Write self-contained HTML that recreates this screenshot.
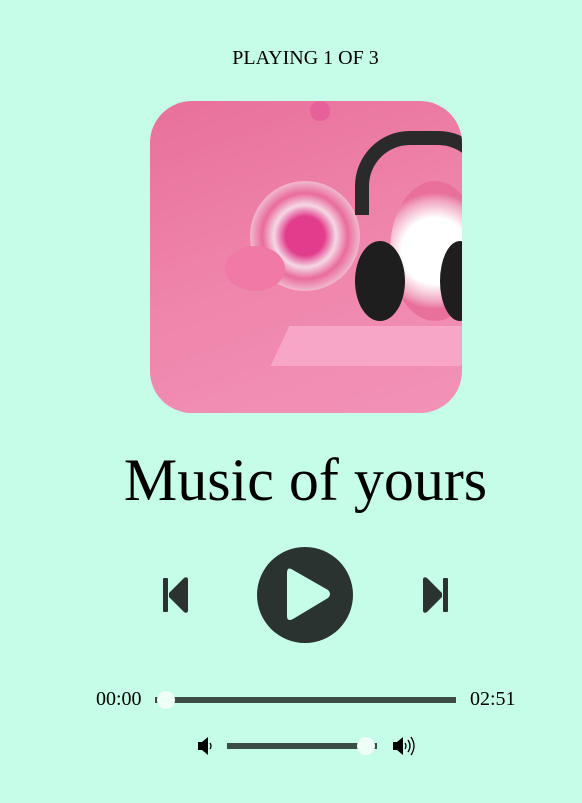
<!DOCTYPE html>
<html><head><style>
body{margin:0;width:582px;height:803px;background:#c5fde8;font-family:"Liberation Serif",serif;position:relative;overflow:hidden}
.a{position:absolute}
</style></head><body>
<div class="a" style="left:0;width:611px;top:47px;text-align:center;font-size:20px;line-height:22px">PLAYING 1 OF 3</div>
<div class="a" style="left:150px;top:101px;width:312px;height:312px;border-radius:42px;overflow:hidden;background:linear-gradient(160deg,#e8709a 0%,#ef85ab 50%,#f392b8 100%)">
 <div class="a" style="left:100px;top:80px;width:110px;height:110px;border-radius:50%;background:radial-gradient(circle,#e23c8c 25%,#f5d8e4 40%,#e96b9c 55%,#f0b6cc 70%,#e8709a 80%)"></div>
 <div class="a" style="left:240px;top:80px;width:90px;height:140px;border-radius:50%;background:radial-gradient(circle,#fff 40%,#f2a9c3 60%,#e8709a 70%)"></div>
 <div class="a" style="left:205px;top:30px;width:110px;height:70px;border-radius:55px 55px 0 0;border:14px solid #2a2a2a;border-bottom:none"></div>
 <div class="a" style="left:205px;top:140px;width:50px;height:80px;border-radius:50%;background:#1e1e1e"></div>
 <div class="a" style="left:290px;top:140px;width:40px;height:80px;border-radius:50%;background:#1e1e1e"></div>
 <div class="a" style="left:75px;top:145px;width:60px;height:45px;border-radius:50%;background:#f07aa5"></div>
 <div class="a" style="left:130px;top:225px;width:190px;height:40px;background:#f8a6c8;transform:skewX(-25deg)"></div>
 <div class="a" style="left:160px;top:0px;width:20px;height:20px;border-radius:50%;background:#e8609a"></div>
</div>
<div class="a" style="left:0;width:611px;top:444px;text-align:center;font-size:60px;line-height:72px">Music of yours</div>
<svg class="a" style="left:0;top:0" width="582" height="803">
 <rect x="163" y="578" width="5" height="34" rx="1" fill="#2a332f"/>
 <path d="M188 579 L188 611 Q187 614 184 612 L169 597 L169 593 L184 578 Q187 576 188 579Z" fill="#2a332f"/>
 <rect x="443" y="578" width="5" height="34" rx="1" fill="#2a332f"/>
 <path d="M423 579 L423 611 Q424 614 427 612 L442 597 L442 593 L427 578 Q424 576 423 579Z" fill="#2a332f"/>
 <circle cx="305" cy="595" r="48" fill="#2a332f"/>
 <path d="M287 573 Q287 566 293 570 L328 590 Q332 594 328 598 L293 619 Q287 622 287 616Z" fill="#c5fde8"/>
 <rect x="155" y="697" width="301" height="6" fill="#3c4d45"/>
 <circle cx="166" cy="700" r="9" fill="#eefff8"/>
 <rect x="227" y="743" width="150" height="6" fill="#3c4d45"/>
 <circle cx="366" cy="746" r="9" fill="#eefff8"/>
 <path d="M198 742 h4 l6 -5 v18 l-6 -5 h-4z" fill="#000"/>
 <path d="M210 743 q2 3 0 6" stroke="#000" fill="none" stroke-width="1.3"/>
 <path d="M393 742 h4 l6 -5 v18 l-6 -5 h-4z" fill="#000"/>
 <path d="M405 743 q2 3 0 6 M408 740 q4 6 0 12 M411 737 q6 9 0 18" stroke="#000" fill="none" stroke-width="1.3"/>
</svg>
<div class="a" style="left:96px;top:688px;font-size:20px;line-height:22px">00:00</div>
<div class="a" style="left:470px;top:688px;font-size:20px;line-height:22px">02:51</div>
</body></html>
